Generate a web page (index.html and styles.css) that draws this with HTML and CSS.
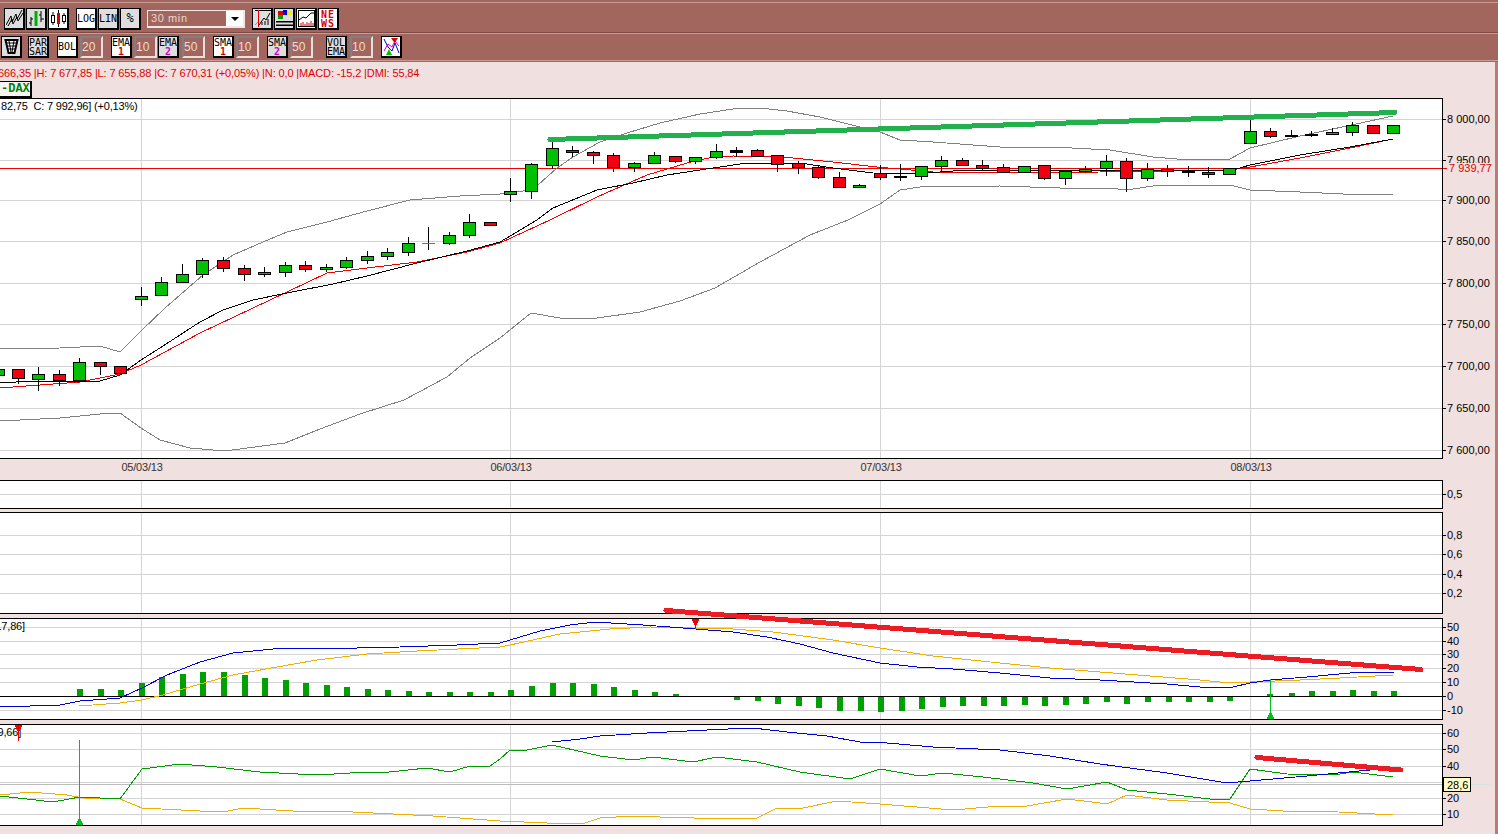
FILE: index.html
```html
<!DOCTYPE html>
<html lang="de">
<head>
    <meta charset="UTF-8">
    <title>DAX Chart</title>
    <link rel="stylesheet" href="styles.css">
</head>
<body>
    <div class="toolbar">
        <div class="tool-row row-one">
            <button class="tool">
                <svg viewBox="0 0 17 17"><path class="ico-line" d="M0 15L5 6L6 12L10 4L11 9L16 0"/><path class="ico-line" d="M2 16L6 9L7 14L11 7L12 11L17 3"/></svg>
            </button>
            <button class="tool">
                <svg viewBox="0 0 17 17"><path class="ico-thin" d="M3 7V16M1 13H3M3 9H5M13 1V12M11 5H13M13 9H16"/><path class="ico-green" d="M8 1V16"/></svg>
            </button>
            <button class="tool tool-on">
                <svg viewBox="0 0 17 17"><path class="ico-thin" d="M3 2V15M8.500 0V17M14 3V14"/><rect class="ico-box" x="1.500" y="5.500" width="3" height="7"/><rect class="ico-red" x="7" y="3" width="3" height="11"/><rect class="ico-box" x="12.500" y="5.500" width="3" height="6"/></svg>
            </button>
            <button class="tool tool-on sp6">LOG</button>
            <button class="tool">LIN</button>
            <button class="tool tool-big">%</button>
            <div class="period sp5"><span class="period-text">30 min</span><span class="period-arrow"></span></div>
            <button class="tool sp6">
                <svg viewBox="0 0 17 17"><path class="ico-thin" d="M5 15L10 8L12 10L16 3M8 15V12M11 15V11M14 15V9M1 0.500H17"/><path class="ico-gray" d="M1 15L4 12"/><path class="ico-redline" d="M4.500 0V17"/></svg>
            </button>
            <button class="tool">
                <svg viewBox="0 0 17 17"><rect x="2" y="1" width="5" height="4" fill="#e00000"/><rect x="7" y="0" width="4" height="5" fill="#0000d0"/><rect x="11" y="1" width="5" height="4" fill="#f0f000"/><rect x="2" y="5" width="5" height="4" fill="#00a000"/><rect x="0" y="11" width="17" height="1.500"/><rect x="0" y="14.500" width="17" height="1.500"/></svg>
            </button>
            <button class="tool tool-on">
                <svg viewBox="0 0 17 17"><rect class="ico-box" x="0.500" y="0.500" width="16" height="16"/><path class="ico-thin" d="M1 10L5 7L8 8L13 3L16 3"/><path class="ico-redthin" d="M3 16V13M5 16V12M7 16V14M9 16V12M11 16V13M13 16V11M15 16V13"/></svg>
            </button>
            <button class="tool tool-on news">NE<br>WS</button>
        </div>
        <div class="tool-row row-two">
            <button class="tool tool-big">
                <svg viewBox="0 0 17 17"><path class="ico-bin" d="M2.500 2H14.500L11.500 15H5.500Z"/><path class="ico-mesh" d="M3 5H14M4 8H13M5 11H12M6 3L8 14M11 3L9 14"/></svg>
            </button>
            <button class="tool sp5">PAR<br>SAR</button>
            <button class="tool tool-on sp7">BOL</button>
            <div class="num sp1">20</div>
            <button class="tool tool-on sp7">EMA<br><b class="one">1</b></button>
            <div class="num sp1">10</div>
            <button class="tool">EMA<br><b class="two">2</b></button>
            <div class="num sp2">50</div>
            <button class="tool tool-on sp7">SMA<br><b class="one">1</b></button>
            <div class="num sp1">10</div>
            <button class="tool sp7">SMA<br><b class="two">2</b></button>
            <div class="num sp1">50</div>
            <button class="tool sp12">VOL<br>EMA</button>
            <div class="num sp2">10</div>
            <button class="tool tool-on sp7">
                <svg viewBox="0 0 17 17"><path class="ico-blue" d="M1 1L5 9L9 13L12 5L16 15"/><path class="ico-magenta" d="M1 13L5 6L9 9L12 3L16 8"/><path fill="#e00000" d="M8 0H15L11.500 5Z"/><path fill="#00c000" d="M3 17L6 11L9 17Z"/></svg>
            </button>
        </div>
    </div>

    <div class="workspace">
        <div class="quote">666,35 |H: 7 677,85 |L: 7 655,88 |C: 7 670,31 (+0,05%) |N: 0,0 |MACD: -15,2 |DMI: 55,84</div>
        <div class="tab">-DAX</div>

        <svg id="pricePanel" class="panel panel-price" viewBox="0 98 1495 382"></svg>
        <svg id="midPanel" class="panel panel-mid" viewBox="0 480 1495 29"></svg>
        <svg id="oscPanel" class="panel panel-std" viewBox="0 512 1495 102"></svg>
        <svg id="macdPanel" class="panel panel-std" viewBox="0 618 1495 102"></svg>
        <svg id="dmiPanel" class="panel panel-std" viewBox="0 724 1495 102"></svg>
    </div>

    <script src="script.js"></script>
</body>
</html>
```

FILE: styles.css
```css
html, body {
    margin: 0;
    padding: 0;
    height: 100%;
    overflow: hidden;
    background-color: #f0e0e0;
    font-family: "Liberation Sans", Arial, sans-serif;
}

.toolbar {
    height: 62px;
    background-color: #a2665e;
    box-sizing: border-box;
    padding-top: 2px;
}

.tool-row {
    display: flex;
    align-items: flex-start;
    gap: 1px;
    box-sizing: border-box;
    border-top: 1px solid #c99d96;
    border-bottom: 1px solid #7d4a44;
}

.row-one {
    height: 31px;
    padding: 5px 0 0 4px;
}

.row-two {
    height: 28px;
    padding: 2px 0 0 1px;
    border-bottom-color: #c99d96;
}

.tool {
    width: 21px;
    height: 22px;
    padding: 0;
    margin: 0;
    box-sizing: border-box;
    display: flex;
    align-items: center;
    justify-content: center;
    flex-wrap: wrap;
    align-content: center;
    flex-shrink: 0;
    border: 1px solid #000;
    border-right-width: 2px;
    border-bottom-width: 2px;
    background-color: #dedede;
    font-family: "DejaVu Sans Mono", monospace;
    font-size: 10px;
    line-height: 9px;
    color: #000;
    text-align: center;
}

.tool svg {
    width: 17px;
    height: 17px;
    display: block;
}

.tool-on {
    background-color: #fff;
}

.tool-big {
    font-size: 12px;
}

.tool b {
    font-weight: bold;
    display: block;
    width: 100%;
}

.one {
    color: #e00000;
}

.two {
    color: #d000d0;
}

.news {
    color: #e00000;
    font-weight: bold;
    letter-spacing: 1px;
}

.sp1 { margin-left: 1px; }
.sp2 { margin-left: 2px; }
.sp5 { margin-left: 5px; }
.sp6 { margin-left: 6px; }
.sp7 { margin-left: 7px; }
.sp12 { margin-left: 12px; }

.num {
    width: 23px;
    height: 22px;
    box-sizing: border-box;
    flex-shrink: 0;
    border: 2px solid #e8e0dc;
    border-top-color: #808080;
    border-left-color: #808080;
    color: #ecdcd4;
    font-size: 12px;
    line-height: 18px;
}

.period {
    width: 98px;
    height: 18px;
    margin-top: 2px;
    box-sizing: border-box;
    display: flex;
    border: 2px solid #f0e8e4;
    border-top-width: 1px;
    border-left-width: 1px;
}

.period-text {
    flex: 1;
    color: #e8d8d0;
    font-size: 11px;
    line-height: 15px;
    padding-left: 3px;
    letter-spacing: 0.6px;
}

.period-arrow {
    width: 17px;
    background-color: #fff;
    position: relative;
}

.period-arrow::after {
    content: "";
    position: absolute;
    left: 5px;
    top: 6px;
    border-left: 4px solid transparent;
    border-right: 4px solid transparent;
    border-top: 4px solid #000;
}

.ico-line { fill: none; stroke: #000; stroke-width: 1; }
.ico-thin { fill: none; stroke: #000; stroke-width: 1; }
.ico-green { fill: none; stroke: #00b000; stroke-width: 3; }
.ico-gray { fill: none; stroke: #999; stroke-width: 1; }
.ico-redline { fill: none; stroke: #e00000; stroke-width: 1; }
.ico-redthin { fill: none; stroke: #e00000; stroke-width: 1; }
.ico-red { fill: #e00000; }
.ico-box { fill: #fff; stroke: #000; stroke-width: 1; }
.ico-bin { fill: #fff; stroke: #000; stroke-width: 2; }
.ico-mesh { fill: none; stroke: #000; stroke-width: 1; }
.ico-blue { fill: none; stroke: #0000d0; stroke-width: 1; }
.ico-magenta { fill: none; stroke: #d000d0; stroke-width: 1; }

.workspace {
    width: 1495px;
    height: 772px;
    box-sizing: content-box;
    border-right: 3px solid #bd7a72;
    border-bottom: 3px solid #bd7a72;
    overflow: hidden;
}

.quote {
    height: 19px;
    line-height: 22px;
    font-size: 11px;
    color: #e00000;
    white-space: nowrap;
    margin-left: -2px;
    letter-spacing: -0.13px;
}

.tab {
    width: 33px;
    height: 17px;
    box-sizing: border-box;
    margin-left: -1px;
    padding-left: 1px;
    border: 1px solid #000;
    border-right-width: 2px;
    border-bottom-width: 2px;
    background-color: #f8f4f4;
    color: #008000;
    font-family: "Liberation Mono", monospace;
    font-size: 12px;
    font-weight: bold;
    line-height: 14px;
}

.panel {
    display: block;
    width: 1495px;
    overflow: visible;
}

.panel-price {
    height: 382px;
}

.panel-mid {
    height: 29px;
    margin-bottom: 3px;
}

.panel-std {
    height: 102px;
    margin-bottom: 4px;
}

.frame { fill: #fff; stroke: none; }
.frame-line { fill: none; stroke: #000; stroke-width: 1; shape-rendering: crispEdges; }
.grid { stroke: #d4d4d4; stroke-width: 1; shape-rendering: crispEdges; }
.tick { stroke: #000; stroke-width: 1; shape-rendering: crispEdges; }
.zero { stroke: #000; stroke-width: 1; shape-rendering: crispEdges; }

.axis-label { font-size: 11px; fill: #000; }
.date-label { font-size: 11px; fill: #333; text-anchor: middle; letter-spacing: -0.2px; }
.chart-label { font-size: 11px; fill: #000; letter-spacing: -0.18px; }
.last-label { font-size: 11px; fill: #e00000; }
.last-box { fill: #f0e0e0; }
.last-line { stroke: #f00000; stroke-width: 1; shape-rendering: crispEdges; }

.series { fill: none; stroke-width: 1; shape-rendering: crispEdges; }
.band { stroke: #808080; }
.ema-fast { stroke: #000; }
.ema-slow { stroke: #f00000; }
.line-blue { stroke: #0000d8; }
.line-yellow { stroke: #f0b000; }
.line-green { stroke: #009a00; }

.trend { fill: none; stroke-width: 5; stroke-linecap: round; shape-rendering: crispEdges; }
.trend-green { stroke: #22b14c; }
.trend-red { stroke: #ed1c24; }

.wick { stroke: #000; stroke-width: 1; shape-rendering: crispEdges; }
.body { stroke: #000; stroke-width: 1; shape-rendering: crispEdges; }
.body-up { fill: #00c000; }
.body-down { fill: #f00010; }
.body-flat { fill: #000; }
.bar { fill: #00a000; }

.arrow-red { fill: #f00000; }
.arrow-red-stem { stroke: #f00000; shape-rendering: crispEdges; }
.arrow-green { fill: #00c020; }
.arrow-green-stem { stroke: #00c020; shape-rendering: crispEdges; }

.cross { stroke: #bcbcbc; stroke-width: 1; shape-rendering: crispEdges; }
.cross-out { stroke: #d4e4e4; stroke-width: 1; shape-rendering: crispEdges; }
.hint-box { fill: #ffffc8; stroke: #000; stroke-width: 1; shape-rendering: crispEdges; }
```

FILE: script.js
```js
document.addEventListener('DOMContentLoaded', function() {
    const PLOT_RIGHT = 1442;
    const DAY_LINES = [141, 510, 880, 1250];

    // x, kind (u/d/f), wick top, body top, body bottom, wick bottom
    const candles = [
        [-2, 'u', 369, 369, 375, 375], [18, 'd', 369, 369, 378, 384], [38, 'u', 367, 374, 379, 391],
        [59, 'd', 370, 374, 380, 386], [79, 'u', 358, 362, 380, 381], [100, 'd', 362, 362, 366, 375],
        [120, 'd', 366, 366, 373, 375], [141, 'u', 287, 296, 299, 306], [161, 'u', 277, 282, 295, 295],
        [182, 'u', 264, 274, 282, 283], [202, 'u', 258, 260, 274, 278], [223, 'd', 257, 260, 268, 272],
        [244, 'd', 265, 268, 274, 281], [264, 'u', 267, 272, 274, 277], [285, 'u', 262, 265, 272, 277],
        [305, 'd', 261, 265, 269, 272], [326, 'u', 264, 267, 269, 272], [346, 'u', 257, 260, 267, 269],
        [367, 'u', 251, 256, 260, 264], [387, 'u', 248, 252, 256, 260], [408, 'u', 237, 243, 252, 256],
        [428, 'n', 227, 243, 243, 250], [449, 'u', 232, 235, 243, 245], [469, 'u', 214, 222, 235, 238],
        [490, 'd', 222, 222, 225, 225], [510, 'u', 178, 191, 194, 202], [531, 'u', 163, 164, 191, 199],
        [552, 'u', 142, 148, 165, 169], [572, 'd', 146, 150, 152, 157], [593, 'd', 151, 152, 155, 164],
        [613, 'd', 153, 155, 167, 172], [634, 'u', 162, 163, 167, 172], [654, 'u', 152, 155, 163, 164],
        [675, 'd', 156, 156, 161, 163], [695, 'u', 157, 157, 161, 164], [716, 'u', 144, 151, 157, 159],
        [736, 'f', 147, 150, 152, 157], [757, 'd', 149, 150, 156, 157], [777, 'd', 155, 155, 164, 172],
        [798, 'd', 161, 163, 167, 174], [818, 'd', 166, 167, 177, 179], [839, 'd', 172, 177, 187, 187],
        [859, 'u', 184, 185, 187, 187], [880, 'd', 165, 173, 177, 180], [900, 'f', 164, 176, 177, 181],
        [921, 'u', 166, 166, 176, 180], [941, 'u', 156, 160, 166, 172], [962, 'd', 158, 160, 165, 165],
        [982, 'd', 160, 165, 168, 170], [1003, 'd', 164, 167, 172, 172], [1024, 'u', 166, 166, 172, 173],
        [1044, 'd', 165, 165, 178, 180], [1065, 'u', 171, 171, 178, 185], [1085, 'u', 166, 169, 171, 173],
        [1106, 'u', 155, 161, 168, 176], [1126, 'd', 158, 161, 178, 192], [1147, 'u', 163, 169, 178, 181],
        [1167, 'd', 165, 169, 171, 177], [1188, 'f', 166, 171, 172, 177], [1208, 'd', 167, 172, 174, 178],
        [1229, 'u', 168, 168, 174, 174], [1250, 'u', 120, 131, 143, 143], [1270, 'd', 128, 131, 136, 138],
        [1291, 'f', 130, 135, 136, 137], [1311, 'f', 131, 134, 135, 137], [1332, 'u', 128, 132, 134, 135],
        [1352, 'u', 122, 125, 132, 136], [1373, 'd', 125, 125, 133, 133], [1393, 'u', 125, 125, 133, 133]
    ];

    const upperBand = [[0,349],[60,348],[100,346],[120,352],[141,331],[165,308],[203,275],[233,255],[263,242],[287,232],[327,222],[367,211],[410,200],[460,196],[500,194],[531,190],[538,185],[557,168],[573,157],[600,142],[627,133],[660,123],[700,114],[733,109],[760,108],[787,111],[820,117],[860,127],[880,132],[900,140],[933,142],[1000,147],[1053,147],[1110,150],[1153,157],[1177,159],[1230,159],[1250,148],[1300,136],[1347,126],[1393,116]];
    const lowerBand = [[0,421],[60,418],[100,414],[120,413],[141,428],[160,440],[190,448],[225,451],[285,443],[320,429],[360,414],[404,400],[447,377],[470,358],[500,338],[531,313],[560,318],[590,319],[640,312],[680,301],[715,288],[760,262],[810,235],[848,220],[880,204],[900,190],[920,187],[1000,186],[1060,188],[1110,188],[1126,190],[1160,185],[1230,185],[1250,190],[1300,192],[1343,194],[1393,194]];
    const emaFast = [[0,383],[33,381],[100,381],[120,375],[141,360],[163,346],[200,322],[223,310],[253,300],[287,293],[333,284],[367,276],[417,263],[467,251],[500,242],[537,220],[553,208],[597,190],[633,183],[667,175],[713,168],[747,163],[800,163],[833,168],[873,173],[913,174],[967,170],[1233,170],[1250,165],[1300,155],[1350,147],[1393,139]];
    const emaSlow = [[0,388],[80,382],[120,374],[141,365],[200,333],[287,292],[327,273],[367,268],[417,262],[467,252],[500,243],[550,220],[597,197],[647,175],[687,163],[713,157],[733,156],[783,157],[833,162],[877,167],[933,172],[1000,173],[1100,172],[1230,170],[1250,167],[1300,158],[1350,148],[1393,139]];

    const macdLine = [[0,707],[60,705],[80,701],[120,698],[142,688],[167,675],[200,662],[233,653],[283,648],[357,648],[400,647],[457,645],[500,643],[510,640],[540,631],[570,625],[595,622],[643,625],[683,628],[733,632],[767,637],[800,644],[833,653],[880,663],[917,667],[953,669],[1000,673],[1050,678],[1100,680],[1167,684],[1200,687],[1233,687],[1250,683],[1270,680],[1307,677],[1350,673],[1395,672]];
    const macdSignal = [[79,706],[120,703],[142,700],[163,695],[200,684],[233,675],[277,667],[317,660],[367,654],[417,651],[500,647],[510,645],[560,634],[610,629],[650,627],[733,629],[773,632],[833,640],[880,648],[933,656],[1000,663],[1050,668],[1100,672],[1150,676],[1200,680],[1230,683],[1250,682],[1300,680],[1340,678],[1393,675]];
    // x, height; negative values hang below the zero line
    const macdBars = [[80,7],[101,7],[121,6],[142,13],[162,19],[183,22],[203,24],[224,24],[245,21],[265,18],[286,16],[306,13],[327,11],[347,9],[368,7],[388,6],[409,5],[429,4],[450,4],[470,4],[491,4],[511,6],[532,10],[553,13],[573,13],[594,12],[614,9],[635,6],[655,4],[676,2],[737,-3],[758,-4],[778,-7],[799,-9],[819,-11],[840,-14],[861,-14],[881,-15],[902,-14],[922,-12],[943,-10],[963,-9],[984,-9],[1004,-9],[1025,-8],[1045,-9],[1066,-8],[1086,-7],[1107,-5],[1127,-7],[1148,-5],[1169,-5],[1189,-5],[1210,-5],[1230,-4],[1270,2],[1292,3],[1312,5],[1333,5],[1353,6],[1374,5],[1394,5]];

    const dmiPlus = [[0,796],[27,799],[53,802],[80,797],[120,799],[142,769],[180,764],[217,767],[260,772],[317,775],[367,772],[380,773],[427,768],[450,772],[470,766],[490,766],[500,759],[510,750],[527,750],[552,745],[600,756],[633,760],[653,757],[693,762],[717,757],[757,762],[800,772],[850,779],[880,769],[920,776],[943,773],[983,777],[1033,783],[1067,789],[1107,782],[1127,790],[1167,794],[1210,799],[1230,799],[1250,769],[1287,774],[1333,775],[1353,772],[1393,777]];
    const dmiMinus = [[0,795],[30,792],[67,795],[83,798],[120,799],[142,808],[200,811],[223,812],[243,808],[293,811],[333,811],[433,816],[500,821],[570,824],[585,823],[600,818],[633,816],[660,817],[727,819],[757,818],[777,808],[803,808],[837,801],[880,804],[953,810],[1000,806],[1027,806],[1067,799],[1100,803],[1107,804],[1127,795],[1167,800],[1230,803],[1250,809],[1283,811],[1320,811],[1393,815]];
    const adx = [[552,742],[580,739],[600,736],[647,733],[687,731],[728,729],[753,728],[787,732],[827,736],[860,742],[887,743],[933,747],[1000,750],[1050,756],[1100,764],[1167,773],[1227,783],[1250,781],[1307,776],[1370,770]];

    function polyline(points, cls) {
        return `<polyline class="${cls}" points="${points.map(p => p.join(',')).join(' ')}"/>`;
    }

    function panelBase(top, bottom, ticks) {
        let html = `<rect class="frame" x="-2" y="${top}" width="${PLOT_RIGHT + 2}" height="${bottom - top}"/>`;
        ticks.forEach(t => {
            html += `<line class="grid" x1="0" x2="${PLOT_RIGHT}" y1="${t.y + 0.5}" y2="${t.y + 0.5}"/>`;
        });
        DAY_LINES.forEach(x => {
            html += `<line class="grid" x1="${x + 0.5}" x2="${x + 0.5}" y1="${top}" y2="${bottom}"/>`;
        });
        return html;
    }

    function panelFrame(top, bottom, ticks) {
        let html = `<rect class="frame-line" x="-2" y="${top + 0.5}" width="${PLOT_RIGHT + 2.5}" height="${bottom - top}"/>`;
        ticks.forEach(t => {
            html += `<line class="tick" x1="${PLOT_RIGHT}" x2="${PLOT_RIGHT + 4}" y1="${t.y + 0.5}" y2="${t.y + 0.5}"/>`;
            html += `<text class="axis-label" x="${PLOT_RIGHT + 5}" y="${t.y + 4}">${t.label}</text>`;
        });
        return html;
    }

    function ticks(list) {
        return list.map(item => ({ y: item[0], label: item[1] }));
    }

    function renderCandles() {
        return candles.map(c => {
            const [x, kind, wickTop, top, bottom, wickBottom] = c;
            const mid = x + 0.5;
            let html = `<line class="wick" x1="${mid}" x2="${mid}" y1="${wickTop}" y2="${wickBottom}"/>`;
            if (kind === 'n') {
                html += `<line class="arrow-green-stem" x1="${x - 6}" x2="${x + 7}" y1="${top + 0.5}" y2="${top + 0.5}"/>`;
                return html;
            }
            const cls = kind === 'u' ? 'body-up' : kind === 'd' ? 'body-down' : 'body-flat';
            html += `<rect class="body ${cls}" x="${x - 5.5}" y="${top + 0.5}" width="12" height="${bottom - top}"/>`;
            return html;
        }).join('');
    }

    function arrowDown(x, top, stemBottom) {
        return `<line class="arrow-red-stem" x1="${x + 0.5}" x2="${x + 0.5}" y1="${top}" y2="${stemBottom}"/>` +
            `<path class="arrow-red" d="M${x - 3} ${top}H${x + 4}V${top + 2}H${x + 3}V${top + 4}H${x + 2}V${top + 6}H${x - 1}V${top + 4}H${x - 2}V${top + 2}H${x - 3}Z"/>`;
    }

    function arrowUp(x, stemTop, bottom) {
        return `<line class="arrow-green-stem" x1="${x + 0.5}" x2="${x + 0.5}" y1="${stemTop}" y2="${bottom}"/>` +
            `<path class="arrow-green" d="M${x - 3} ${bottom}H${x + 4}V${bottom - 2}H${x + 3}V${bottom - 4}H${x + 2}V${bottom - 6}H${x - 1}V${bottom - 4}H${x - 2}V${bottom - 2}H${x - 3}Z"/>`;
    }

    function renderPrice() {
        const list = ticks([[119,'8 000,00'],[160,'7 950,00'],[200,'7 900,00'],[241,'7 850,00'],[283,'7 800,00'],[324,'7 750,00'],[366,'7 700,00'],[408,'7 650,00'],[450,'7 600,00']]);
        let html = panelBase(98, 458, list);
        html += `<line class="last-line" x1="0" x2="${PLOT_RIGHT + 5}" y1="168.5" y2="168.5"/>`;
        html += polyline(upperBand, 'series band') + polyline(lowerBand, 'series band');
        html += polyline(emaSlow, 'series ema-slow') + polyline(emaFast, 'series ema-fast');
        html += renderCandles();
        html += polyline([[550,139.5],[1395,112.5]], 'trend trend-green');
        html += '<text class="chart-label" x="1" y="110">82,75&#160; C: 7 992,96] (+0,13%)</text>';
        html += panelFrame(98, 458, list);
        html += '<rect class="last-box" x="1447" y="163" width="47" height="12"/>';
        html += '<text class="last-label" x="1449" y="172">7 939,77</text>';
        ['05/03/13', '06/03/13', '07/03/13', '08/03/13'].forEach((label, i) => {
            html += `<text class="date-label" x="${DAY_LINES[i] + 1}" y="471">${label}</text>`;
        });
        return html;
    }

    function renderMacd() {
        const list = ticks([[627,'50'],[641,'40'],[654,'30'],[668,'20'],[682,'10'],[696,'0'],[710,'-10']]);
        let html = panelBase(618, 719, list);
        html += macdBars.map(b => {
            const h = Math.abs(b[1]);
            const y = b[1] > 0 ? 696 - h : 697;
            return `<rect class="bar" x="${b[0] - 3}" y="${y}" width="6" height="${h}"/>`;
        }).join('');
        html += `<line class="zero" x1="0" x2="${PLOT_RIGHT}" y1="696.5" y2="696.5"/>`;
        html += polyline(macdSignal, 'series line-yellow') + polyline(macdLine, 'series line-blue');
        html += arrowDown(695, 619, 629) + arrowUp(1270, 679, 719);
        html += '<text class="chart-label" x="-4.600" y="630">17,86]</text>';
        html += panelFrame(618, 719, list);
        html += polyline([[666,610.5],[1421,669.5]], 'trend trend-red');
        return html;
    }

    function renderDmi() {
        const list = ticks([[733,'60'],[749,'50'],[766,'40'],[798,'20'],[814,'10']]);
        let html = panelBase(724, 825, list.concat([{ y: 782 }]));
        html += `<line class="cross" x1="0" x2="${PLOT_RIGHT}" y1="784.5" y2="784.5"/>`;
        html += polyline(dmiMinus, 'series line-yellow') + polyline(dmiPlus, 'series line-green') + polyline(adx, 'series line-blue');
        html += '<text class="chart-label" x="-2.500" y="736">9,66]</text>';
        html += arrowDown(18, 725, 741) + arrowUp(79, 740, 825);
        html += polyline([[1257,757.5],[1401,770]], 'trend trend-red');
        html += panelFrame(724, 825, list);
        html += '<line class="cross-out" x1="1471" x2="1490" y1="784.5" y2="784.5"/>';
        html += '<rect class="hint-box" x="1443.500" y="777.500" width="27" height="14"/>';
        html += '<text class="axis-label" x="1447" y="788.500">28,6</text>';
        return html;
    }

    const midTicks = ticks([[494,'0,5']]);
    document.getElementById('midPanel').innerHTML = panelBase(480, 508, midTicks) + panelFrame(480, 508, midTicks);

    const oscTicks = ticks([[535,'0,8'],[554,'0,6'],[574,'0,4'],[593,'0,2']]);
    document.getElementById('oscPanel').innerHTML = panelBase(512, 613, oscTicks) + panelFrame(512, 613, oscTicks);

    document.getElementById('pricePanel').innerHTML = renderPrice();
    document.getElementById('macdPanel').innerHTML = renderMacd();
    document.getElementById('dmiPanel').innerHTML = renderDmi();
});
```
